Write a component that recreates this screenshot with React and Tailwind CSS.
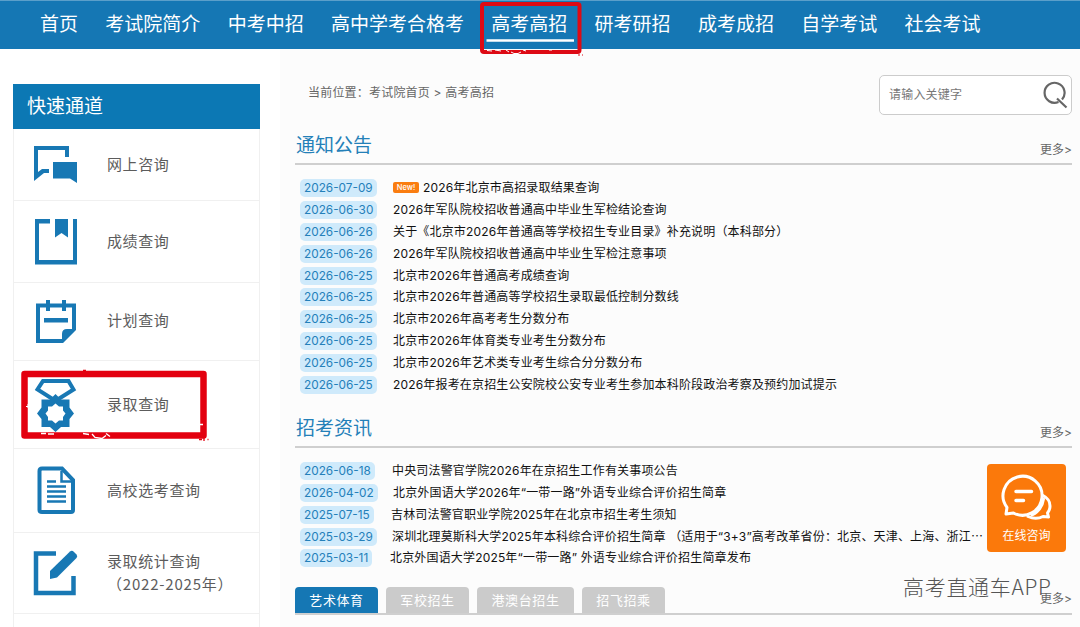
const NAV = ["首页", "考试院简介", "中考中招", "高中学考合格考", "高考高招", "研考研招", "成考成招", "自学考试", "社会考试"];

const NOTICES = [
  { date: "2026-07-09", title: "2026年北京市高招录取结果查询", fresh: true },
  { date: "2026-06-30", title: "2026年军队院校招收普通高中毕业生军检结论查询" },
  { date: "2026-06-26", title: "关于《北京市2026年普通高等学校招生专业目录》补充说明（本科部分）" },
  { date: "2026-06-26", title: "2026年军队院校招收普通高中毕业生军检注意事项" },
  { date: "2026-06-25", title: "北京市2026年普通高考成绩查询" },
  { date: "2026-06-25", title: "北京市2026年普通高等学校招生录取最低控制分数线" },
  { date: "2026-06-25", title: "北京市2026年高考考生分数分布" },
  { date: "2026-06-25", title: "北京市2026年体育类专业考生分数分布" },
  { date: "2026-06-25", title: "北京市2026年艺术类专业考生综合分分数分布" },
  { date: "2026-06-25", title: "2026年报考在京招生公安院校公安专业考生参加本科阶段政治考察及预约加试提示" },
];

const NEWS = [
  { date: "2026-06-18", title: "中央司法警官学院2026年在京招生工作有关事项公告", offset: "-ml-px" },
  { date: "2026-04-02", title: "北京外国语大学2026年“一带一路”外语专业综合评价招生简章" },
  { date: "2025-07-15", title: "吉林司法警官职业学院2025年在北京市招生考生须知", offset: "-ml-[2px]" },
  { date: "2025-03-29", title: "深圳北理莫斯科大学2025年本科综合评价招生简章 （适用于“3+3”高考改革省份：北京、天津、上海、浙江⋯", offset: "-ml-px" },
  { date: "2025-03-11", title: "北京外国语大学2025年“一带一路” 外语专业综合评价招生简章发布", offset: "-ml-[3px]" },
];

const ICONS = {
  chat: (
    <>
      <path d="M34 16V6H69V17H65V10H38V32L42 29H49V33H44L34 41Z" fill="#1878b4" />
      <path d="M53 22H77V43L70 38.500H53Z" fill="#1878b4" />
    </>
  ),
  book: (
    <>
      <path d="M35 8H50V12.500H39V49H73V8H77V53.500H35Z" fill="#1878b4" />
      <path d="M55 8H68V26.500L61.500 22L55 26.500Z" fill="#1878b4" />
    </>
  ),
  note: (
    <path d="M46 8H50V11.500H62V8H66V11.500H76V38L63 51H36V11.500H46ZM40 15.500V47H62V42Q62 37 67 37H72V15.500H66V19H62V15.500H50V19H46V15.500ZM44 26H68V30.500H44Z" fill="#1878b4" fillRule="evenodd" />
  ),
  medal: (
    <>
      <path d="M43 11H68.500L73.500 19.500L58.500 29H52.500L37.500 19.500Z" fill="none" stroke="#1878b4" strokeWidth="4" />
      <path d="M55.500 24L61 29.500H69.500V37.500L74 43.500L69.500 49V57H61L55.500 62L50 57H41.500V49L37 43.500L41.500 37.500V29.500H50ZM55.500 33.500L52 36.500H48V40.500L45.500 43.500L48 47V50.500H52L55.500 53.500L59 50.500H63V47L65.500 43.500L63 40.500V36.500H59Z" fill="#1878b4" fillRule="evenodd" />
    </>
  ),
  doc: (
    <>
      <path d="M42 8.500H62L73 20V50Q73 52 71 52H42Q39.500 52 39.500 50V11Q39.500 8.500 42 8.500Z" fill="none" stroke="#1878b4" strokeWidth="4" />
      <path d="M61.500 11V21.500H73" fill="none" stroke="#1878b4" strokeWidth="2.500" />
      <path d="M47 21.500H56M47 26.500H66M47 31.500H66M47 36.500H66M47 41.500H66" stroke="#1878b4" strokeWidth="2.500" />
    </>
  ),
  edit: (
    <>
      <path d="M56 10.500H36V50H73.500V33" fill="none" stroke="#1878b4" strokeWidth="4.500" />
      <path d="M50 28L70 8.500Q72 7 74 9L76.500 11.500Q78 13 76.500 15L57 34.500L50 36Z" fill="#1878b4" />
    </>
  ),
};

function SideItem({ icon, height, iconTop, top, children }) {
  return (
    <li className={`flex border-b border-[#f0f0f0] ${height}`}>
      <svg className={`-ml-[14px] block h-[70px] w-[107px] shrink-0 ${iconTop}`} viewBox="0 0 107 70">{ICONS[icon]}</svg>
      <span className={`whitespace-nowrap text-[15px] leading-[22px] tracking-[0.6px] text-[#5c5c5c] ${top}`}>{children}</span>
    </li>
  );
}

function Row({ date, title, fresh, offset = "" }) {
  return (
    <li className="flex h-[21.9px] items-center whitespace-nowrap">
      <div className="w-[93px] shrink-0">
        <span className="block h-[18px] w-fit rounded-[5px] bg-[#cfeafb] px-[4px] text-[11.8px] leading-[18px] text-[#2480ba]">{date}</span>
      </div>
      {fresh && (
        <span className="mr-[4px] flex h-[11px] w-[26px] items-center justify-center rounded-[2px] bg-[#fa7d10] text-[7.5px] font-medium text-white">New!</span>
      )}
      <span className={`text-[12px] leading-[18px] tracking-[0.17px] text-[#111] ${offset}`}>{title}</span>
    </li>
  );
}

function SectionHead({ title }) {
  return (
    <div className="flex h-[36px] shrink-0 items-start justify-between border-b-2 border-[#cfcfcf]">
      <h2 className="pl-px pt-px text-[19px] leading-[32px] text-[#2480b8]">{title}</h2>
      <a className="pt-[11px] text-[12px] leading-[20px] text-[#666]">更多&gt;</a>
    </div>
  );
}

export default function App() {
  return (
    <div className="relative flex h-[627px] w-[1080px] flex-col overflow-hidden bg-white font-['Inter','Noto_Sans_CJK_SC',sans-serif] font-normal">
      <nav className="flex h-[49px] shrink-0 gap-[27.3px] border-t border-[#5b9fca] bg-[#1577b4] pl-[40px]">
        {NAV.map((t) => (
          <a key={t} className="whitespace-nowrap text-[19px] leading-[48px] text-white">{t}</a>
        ))}
      </nav>

      <div className="flex min-h-0 flex-1">
        <aside className="ml-[13px] mt-[35px] w-[247px] shrink-0">
          <h2 className="h-[45px] bg-[#0c78b4] pl-[14px] text-[19px] leading-[46px] text-white">快速通道</h2>
          <ul className="border-x border-[#f0f0f0]">
            <SideItem icon="chat" height="h-[72px]" iconTop="mt-[11px]" top="pt-[25px]">网上咨询</SideItem>
            <SideItem icon="book" height="h-[82px]" iconTop="mt-[9.500px]" top="pt-[30px]">成绩查询</SideItem>
            <SideItem icon="note" height="h-[78px]" iconTop="mt-[9px]" top="pt-[27px]">计划查询</SideItem>
            <SideItem icon="medal" height="h-[88px]" iconTop="mt-[9px]" top="pt-[33px]">录取查询</SideItem>
            <SideItem icon="doc" height="h-[84px]" iconTop="mt-[11px]" top="pt-[31px]">高校选考查询</SideItem>
            <SideItem icon="edit" height="h-[81px]" iconTop="mt-[10px]" top="pt-[18px]">
              录取统计查询<br /><span className="font-['Noto_Sans_CJK_SC',sans-serif] tracking-[0.8px]">（2022-2025年）</span>
            </SideItem>
            <li className="h-[40px]" />
          </ul>
        </aside>

        <main className="ml-[20px] flex flex-1 flex-col bg-[#fcfcfc] pl-[15px] pr-[8px]">
          <div className="flex h-[80px] shrink-0 items-start justify-between">
            <p className="pl-[13px] pt-[35px] text-[12px] leading-[18px] tracking-[0.2px] text-[#666]">当前位置：考试院首页 &gt; 高考高招</p>
            <div className="mt-[26px] flex h-[40px] w-[193px] items-center justify-between rounded-[5px] border border-[#ccc] bg-white pl-[9px] pr-[3px]">
              <span className="text-[12px] tracking-[0.2px] text-[#777]">请输入关键字</span>
              <svg className="h-[28px] w-[28px]" viewBox="0 0 28 28" fill="none" stroke="#666" strokeWidth="2.2">
                <path d="M18.500 21A10 10 0 1 1 22 18.500M17 17.500L26.500 26.500" />
              </svg>
            </div>
          </div>
          <SectionHead title="通知公告" />
          <ul className="shrink-0 pl-[5px] pt-[12px]">
            {NOTICES.map((n) => <Row key={n.title} {...n} />)}
          </ul>
          <div className="h-[16px] shrink-0" />
          <SectionHead title="招考资讯" />
          <ul className="shrink-0 pl-[5px] pt-[12px]">
            {NEWS.map((n) => <Row key={n.title} {...n} />)}
          </ul>
          <div className="mt-[18px] flex h-[28px] shrink-0 items-end gap-[8px] border-b-2 border-[#cfcfcf] text-[13px] leading-[27px] tracking-[0.6px] text-white">
            <span className="h-[26px] w-[83px] rounded-t-[4px] bg-[#1577b4] text-center">艺术体育</span>
            <span className="h-[26px] w-[83px] rounded-t-[4px] bg-[#cbcbcb] text-center">军校招生</span>
            <span className="h-[26px] w-[97px] rounded-t-[4px] bg-[#cbcbcb] text-center">港澳台招生</span>
            <span className="h-[26px] w-[83px] rounded-t-[4px] bg-[#cbcbcb] text-center">招飞招乘</span>
            <a className="ml-auto pb-px text-[12px] tracking-normal text-[#666]">更多&gt;</a>
          </div>
        </main>
      </div>

      <svg className="absolute left-[475px] top-0 h-[60px] w-[115px]" viewBox="0 0 115 60">
        <path d="M11.500 40.500H99" stroke="#fff" strokeWidth="2.500" />
        <rect x="7" y="4" width="97.500" height="48" rx="2" fill="none" stroke="#dd0a14" strokeWidth="4" />
        <path d="M12 50.500l5 .5M20 50l6 1M31 50l3 2M36 52l3 1.500l4 0l3-1.500M48 50l3 1M74 50h3" stroke="#fff" strokeWidth="1" fill="none" />
        <path d="M103 55h2M107 55h1" stroke="#dd0a14" strokeWidth="1" />
      </svg>
      <svg className="absolute left-[15px] top-[365px] h-[80px] w-[200px]" viewBox="0 0 200 80">
        <path d="M9.500 9H188.500V70.500H9.500Z" fill="none" stroke="#e3000f" strokeWidth="6.500" strokeLinejoin="round" />
        <path d="M26 68.500h5M33 69h6M68 68.500l6 1M77 69l3 3.500l7 1l4-3M91 68.500l4 3M185 59.500h3" stroke="#fff" strokeWidth="1.300" fill="none" />
        <path d="M11 41.500h4M13 39v4" stroke="#fff" strokeWidth="1" />
        <path d="M184 74.500h3M189 73v3M192.500 74.500h1M68 5.500h3" stroke="#e3000f" strokeWidth="1.300" />
      </svg>

      <div className="absolute left-[987px] top-[464px] flex h-[88px] w-[79px] flex-col items-center rounded-[4px] bg-[#fb790b] text-white">
        <svg className="mt-[8px] h-[50px] w-[56px] shrink-0" viewBox="0 0 56 50" fill="none" stroke="#fff" strokeWidth="3" strokeLinecap="round" strokeLinejoin="round">
          <path d="M8 35.500A19.500 19.500 0 1 1 14.500 41L7 42Z" />
          <path d="M44 23.500Q51 27 51 34Q51 38 48.500 41L49.500 45L44 44.500Q37 48 29 44.500" />
          <path d="M44.500 27Q43 38 33 43" />
          <path d="M17 19.500H32.500M17 28.500H24.500" strokeWidth="3.500" />
        </svg>
        <span className="text-[12px] leading-[27px]">在线咨询</span>
      </div>
      <div className="absolute left-[903px] top-[571px] whitespace-nowrap font-['Noto_Sans_CJK_SC',sans-serif] text-[21px] font-light leading-[30px] tracking-[0.7px] text-[#555]">高考直通车APP</div>
    </div>
  );
}
